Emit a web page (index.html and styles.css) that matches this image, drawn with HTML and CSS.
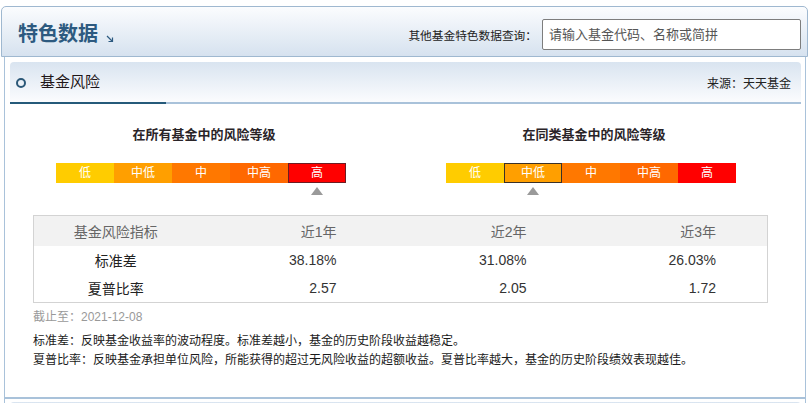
FILE: index.html
```html
<!DOCTYPE html>
<html lang="zh-CN">
<head>
<meta charset="utf-8">
<title>特色数据</title>
<link rel="stylesheet" href="styles.css">
</head>
<body>
<div class="wrap">
  <div class="topbar">
    <h1 class="title">特色数据<svg class="title-arrow" width="8" height="8" viewBox="0 0 8 8"><path d="M1 1 L6.5 6.5 M6.5 2.5 V6.5 H2.5" fill="none" stroke="#2d5a80" stroke-width="1.2"/></svg></h1>
    <div class="search">
      <span class="search-label">其他基金特色数据查询：</span>
      <input class="search-input" type="text" placeholder="请输入基金代码、名称或简拼">
    </div>
  </div>

  <div class="panel">
    <div class="panel-head">
      <span class="ring"></span>
      <span class="panel-title">基金风险</span>
      <span class="source">来源：天天基金</span>
    </div>

    <div class="grades">
      <div class="grade">
        <div class="grade-title">在所有基金中的风险等级</div>
        <div class="bar">
          <span class="seg s1">低</span>
          <span class="seg s2">中低</span>
          <span class="seg s3">中</span>
          <span class="seg s4">中高</span>
          <span class="seg s5 on-red">高</span>
        </div>
        <div class="marks">
          <span class="mark"></span><span class="mark"></span><span class="mark"></span><span class="mark"></span><span class="mark"><i class="tri"></i></span>
        </div>
      </div>
      <div class="grade">
        <div class="grade-title">在同类基金中的风险等级</div>
        <div class="bar">
          <span class="seg s1">低</span>
          <span class="seg s2 on-dark">中低</span>
          <span class="seg s3">中</span>
          <span class="seg s4">中高</span>
          <span class="seg s5">高</span>
        </div>
        <div class="marks">
          <span class="mark"></span><span class="mark"><i class="tri"></i></span><span class="mark"></span><span class="mark"></span><span class="mark"></span>
        </div>
      </div>
    </div>

    <table class="risk">
      <colgroup><col class="c1"><col class="cn"><col class="cn"><col class="cn"></colgroup>
      <thead>
        <tr><th class="name">基金风险指标</th><th>近1年</th><th>近2年</th><th>近3年</th></tr>
      </thead>
      <tbody>
        <tr><td class="name">标准差</td><td>38.18%</td><td>31.08%</td><td>26.03%</td></tr>
        <tr><td class="name">夏普比率</td><td>2.57</td><td>2.05</td><td>1.72</td></tr>
      </tbody>
    </table>

    <div class="asof">截止至：2021-12-08</div>
    <p class="note">标准差：反映基金收益率的波动程度。标准差越小，基金的历史阶段收益越稳定。</p>
    <p class="note">夏普比率：反映基金承担单位风险，所能获得的超过无风险收益的超额收益。夏普比率越大，基金的历史阶段绩效表现越佳。</p>
  </div>

  <div class="panel next">
    <div class="panel-head"></div>
  </div>
</div>
</body>
</html>
```

FILE: styles.css
```css
html, body {
  margin: 0;
  padding: 0;
  background: #ffffff;
}
body {
  font-family: "Liberation Sans", "Noto Sans CJK SC", sans-serif;
  color: #333;
  overflow: hidden;
}
.wrap {
  width: 807px;
  margin-left: 1px;
  padding-top: 6px;
}

/* top bar */
.topbar {
  height: 44px;
  padding: 5px 6px 0 16px;
  border: 1px solid #9fb8d0;
  border-radius: 5px 5px 0 0;
  background: linear-gradient(#fbfcfe, #d6e2ef);
  display: flex;
  align-items: center;
  justify-content: space-between;
}
.title {
  margin: 0;
  font-size: 20px;
  font-weight: bold;
  color: #2d5a80;
  line-height: 24px;
  display: flex;
  align-items: flex-end;
  gap: 8px;
}
.title-arrow {
  margin-bottom: 3px;
}
.search {
  display: flex;
  align-items: center;
  gap: 5px;
}
.search-label {
  font-size: 11.7px;
  color: #222;
}
.search-input {
  box-sizing: border-box;
  width: 259px;
  height: 31px;
  margin: 0;
  padding: 0 6px;
  border: 1px solid #7d7d7d;
  border-radius: 2px;
  font-family: "Liberation Sans", "Noto Sans CJK SC", sans-serif;
  font-size: 13px;
  background: #fff;
}
.search-input::placeholder {
  color: #555;
}

/* panel */
.panel {
  margin: 0 2px 0 3px;
  border: 1px solid #a9c2da;
  border-top: none;
  padding: 5px 4px 27px 5px;
}
.panel-head {
  position: relative;
  height: 40px;
  border-bottom: 2px solid #a9c2da;
  border-radius: 4px 4px 0 0;
  background: linear-gradient(#d9e4f0, #fbfcfe);
  display: flex;
  align-items: center;
  padding: 0 10px 0 6px;
}
.panel-head::after {
  content: "";
  position: absolute;
  left: 0;
  bottom: -2px;
  width: 156px;
  height: 2px;
  background: #255a7a;
}
.ring {
  box-sizing: border-box;
  width: 10px;
  height: 10px;
  border: 2px solid #2b5878;
  border-radius: 50%;
  margin-top: 2px;
}
.panel-title {
  margin-left: 14px;
  font-size: 15px;
  color: #1e1618;
  line-height: 20px;
}
.source {
  margin-left: auto;
  font-size: 12px;
  color: #222;
  margin-top: 1px;
}

/* grades */
.grades {
  display: flex;
  gap: 100px;
  margin: 23px 0 0 46px;
}
.grade {
  width: 290px;
}
.grade-title {
  font-size: 13px;
  font-weight: bold;
  line-height: 16px;
  color: #2a2428;
  text-align: center;
  padding-left: 6px;
}
.bar {
  display: flex;
  margin-top: 20px;
  height: 20px;
}
.seg {
  flex: 1;
  color: #fff;
  font-size: 12px;
  line-height: 20px;
  text-align: center;
}
.s1 { background: #ffcc00; }
.s2 { background: #ff9f00; }
.s3 { background: #ff7800; }
.s4 { background: #ff6800; }
.s5 { background: #ff0000; }
.on-red { box-shadow: inset 0 0 0 1px #6e1c22; }
.on-dark { box-shadow: inset 0 0 0 1px #3a3028; }
.marks {
  display: flex;
  margin-top: 4px;
  height: 8px;
}
.mark {
  flex: 1;
  display: flex;
  justify-content: center;
}
.tri {
  width: 0;
  height: 0;
  border-left: 6px solid transparent;
  border-right: 6px solid transparent;
  border-bottom: 8px solid #9a9a9a;
}

/* table */
.risk {
  margin: 20px 0 0 23px;
  width: 734px;
  table-layout: fixed;
  border-collapse: collapse;
  border: 1px solid #d3d3d3;
  font-size: 14px;
}
.c1 { width: 164px; }
.cn { width: 190px; }
.risk th {
  height: 30px;
  padding: 0 51px 0 0;
  background: #f2f2f2;
  font-weight: normal;
  color: #666;
  text-align: right;
}
.risk td {
  height: 28px;
  padding: 0 51px 0 0;
  color: #333;
  text-align: right;
}
.risk .name {
  text-align: center;
  padding: 0;
}
.risk td.name {
  color: #222;
}

.asof {
  margin: 6px 0 0 23px;
  font-size: 12px;
  line-height: 16px;
  color: #999;
}
.note {
  margin: 0 0 0 23px;
  font-size: 12px;
  line-height: 19px;
  color: #1a1a1a;
}
.asof + .note {
  margin-top: 7px;
}

.panel.next {
  padding: 3px 4px 0 5px;
  border-top: 1px solid #a9c2da;
}
.panel.next .panel-head::after {
  display: none;
}
```
